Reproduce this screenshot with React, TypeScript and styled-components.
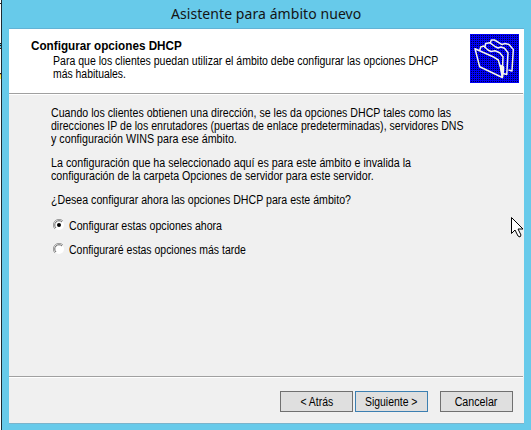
import React from 'react';
import styled, { createGlobalStyle } from 'styled-components';

const Global = createGlobalStyle`
  * { box-sizing: border-box; }
  body { margin: 0; overflow: hidden; background: #67caea; font-family: "Liberation Sans", Arial, sans-serif; color: #000; }
`;

const Screen = styled.div`
  display: grid;
  grid-template-columns: 1px 1px 1fr;
  width: 531px;
  height: 430px;
`;
const Backdrop = styled.div`
  background: linear-gradient(#fff 0 3px, #222 3px 4px, #fff 4px 43px, #111 43px 44px, #67caea 44px 45px, #111 45px 46px, #67caea 46px 48px, #421 48px 49px, #fff 49px 73px, #222 73px 74px, #f0a030 74px 75px, #fff060 75px 79px, #fff 79px);
`;
const Edge = styled.div`background: #1d2b33;`;
const Window = styled.div`
  display: flex;
  flex-direction: column;
  background: #67caea;
  padding: 0 7px 7px;
`;
const TitleBar = styled.div`
  height: 29px;
  padding-left: 162px;
  border-bottom: 1px solid #62b3d6;
  font: 14px/27px "Noto Sans", "Open Sans", sans-serif;
  letter-spacing: 0.07px;
  color: #141414;
`;
const Client = styled.div`
  width: 515px;
  height: 395px;
  display: flex;
  flex-direction: column;
  background: #f0f0f0;
  border-bottom: 1px solid #7ab4cc;
`;
const Header = styled.header`
  display: flex;
  height: 64px;
  background: #fff;
  padding: 5px 5px 0 22px;
  justify-content: space-between;
`;
const Heading = styled.div`
  width: 410px;
  padding-top: 6px;
`;
const Indent = styled.div`padding-left: 22px; padding-top: 2px;`;
const Rule = styled.div`
  width: 514px;
  height: 2px;
  border-top: 1px solid #a0a0a0;
  border-bottom: 1px solid #fff;
`;
const Line = styled.div<{ $k?: number; $bold?: boolean; $center?: boolean }>`
  font-size: 12px;
  line-height: 13px;
  height: 13px;
  white-space: pre;
  font-weight: ${p => (p.$bold ? 700 : 400)};
  transform: scaleX(${p => p.$k ?? 0.88});
  transform-origin: ${p => (p.$center ? 'center' : 'left')};
`;
const Body = styled.main`
  flex: 1;
  padding: 12px 0 0 42px;
`;
const Paragraph = styled.div`margin-bottom: 11px;`;
const Options = styled.div`
  padding: 2px 0 0 2px;
`;
const Option = styled.label`
  display: flex;
  align-items: center;
  gap: 4px;
  height: 13px;
  margin-bottom: 11px;
`;
const RadioMark = styled.svg`
  margin-top: -3px;
`;
const Footer = styled.footer`
  display: flex;
  height: 45px;
  padding: 13px 0 0 271px;
`;
const Button = styled.button<{ $primary?: boolean; $gap?: number }>`
  width: 73px;
  height: 21px;
  margin: 0 0 0 ${p => p.$gap ?? 0}px;
  padding: 2px 0 0;
  display: flex;
  align-items: center;
  justify-content: center;
  color: #000;
  font-family: inherit;
  background: #dfdfdf;
  border: 1px solid ${p => (p.$primary ? '#3c7fb1' : '#707070')};
`;
const Cursor = styled.svg`
  position: absolute;
  left: 511px;
  top: 217px;
`;

const ditherRows = Array.from({ length: 24 }, (_, i) => `M1 ${i * 2 + 1.5}H48`).join('');

const Folders = () => (
  <svg width="49" height="49" viewBox="0 0 49 49">
    <rect width="49" height="49" fill="#0000f8" />
    <path d={ditherRows} stroke="#000038" strokeDasharray="1 1" shapeRendering="crispEdges" />
    <g fill="none" stroke="#f4f4ee" strokeWidth="1.5" strokeLinejoin="round">
      <path d="M20.3 9L21.3 6H24.5L30 9.3 32 10.5 35 9.5 39 10.5 43.3 15.5 42 37 38.5 36" />
      <path d="M14.7 13.5L15.7 9.5 19.7 8.7 25 12.5 28 14 31 13 34.5 14.3 38 18.7 36.8 40.5 33 39.5" />
      <path d="M9.7 16.5L10.7 13 13.7 12 18 16 21 17.5 25 16.8 29.7 18.7 33 22.7 32.5 35" />
      <path d="M5 14.8L23 22.7 28.3 26 30.5 33.5 32.3 43.5 9.7 32.8Z" />
      <path d="M30.5 31.5L33.5 33V36L32.5 43.5Z" fill="#f4f4ee" />
    </g>
  </svg>
);

const Radio = ({ on }: { on?: boolean }) => (
  <RadioMark width="12" height="12" viewBox="0 0 12 12">
    <circle cx="6" cy="6" r="5" fill="#fff" />
    <path d="M2 10A5.4 5.4 0 0 1 10 2" fill="none" stroke="#999" />
    <path d="M3 9A4.2 4.2 0 0 1 9 3" fill="none" stroke="#666" />
    {on && <circle cx="6" cy="6" r="2" />}
  </RadioMark>
);

export default function App() {
  return (
    <>
      <Global />
      <Screen>
        <Backdrop />
        <Edge />
        <Window>
          <TitleBar>Asistente para ámbito nuevo</TitleBar>
          <Client>
            <Header>
              <Heading>
                <Line $bold $k={0.975}>Configurar opciones DHCP</Line>
                <Indent>
                  <Line $k={0.878}>Para que los clientes puedan utilizar el ámbito debe configurar las opciones DHCP</Line>
                  <Line $k={0.868}>más habituales.</Line>
                </Indent>
              </Heading>
              <Folders />
            </Header>
            <Rule />
            <Body>
              <Paragraph>
                <Line $k={0.885}>Cuando los clientes obtienen una dirección, se les da opciones DHCP tales como las</Line>
                <Line $k={0.88}>direcciones IP de los enrutadores (puertas de enlace predeterminadas), servidores DNS</Line>
                <Line $k={0.893}>y configuración WINS para ese ámbito.</Line>
              </Paragraph>
              <Paragraph>
                <Line $k={0.892}>La configuración que ha seleccionado aquí es para este ámbito e invalida la</Line>
                <Line $k={0.889}>configuración de la carpeta Opciones de servidor para este servidor.</Line>
              </Paragraph>
              <Paragraph>
                <Line $k={0.884}>¿Desea configurar ahora las opciones DHCP para este ámbito?</Line>
              </Paragraph>
              <Options>
                <Option><Radio on /><Line $k={0.882}>Configurar estas opciones ahora</Line></Option>
                <Option><Radio /><Line $k={0.872}>Configuraré estas opciones más tarde</Line></Option>
              </Options>
            </Body>
            <Rule />
            <Footer>
              <Button><Line $center $k={0.87}>&lt; Atrás</Line></Button>
              <Button $primary $gap={2}><Line $center $k={0.87}>Siguiente &gt;</Line></Button>
              <Button $gap={12}><Line $center $k={0.89}>Cancelar</Line></Button>
            </Footer>
          </Client>
        </Window>
      </Screen>
      <Cursor width="13" height="21" viewBox="0 0 13 21">
        <path d="M.5.5v16l3.5-3.5 3 6 2 1 1-2-3-6h5z" fill="#fff" stroke="#000" />
      </Cursor>
    </>
  );
}
